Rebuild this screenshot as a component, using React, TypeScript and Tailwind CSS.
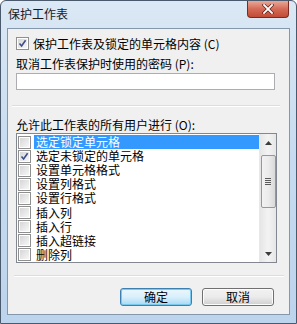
import React from "react";

const font = { fontFamily: '"Noto Sans CJK SC", "Liberation Sans", sans-serif' };

function Check({ checked }: { checked: boolean }) {
  return (
    <div className="w-[13px] h-[13px] border border-[#8f8f8f] bg-white p-[1px] shrink-0">
      <div className="w-full h-full bg-gradient-to-br from-[#d6d6d6] to-[#f7f7f7] relative">
        {checked && (
          <svg viewBox="0 0 9 9" className="absolute inset-0 w-[9px] h-[9px]">
            <path d="M1.5 4.5 L3.6 7 L7.6 1.2" fill="none" stroke="#3b4e8c" strokeWidth="1.6" />
          </svg>
        )}
      </div>
    </div>
  );
}

const items = [
  "选定锁定单元格",
  "选定未锁定的单元格",
  "设置单元格格式",
  "设置列格式",
  "设置行格式",
  "插入列",
  "插入行",
  "插入超链接",
  "删除列",
];

export default function App() {
  return (
    <div
      className="w-[297px] h-[324px] border border-[#4a5a6c] rounded-t-[6px] bg-gradient-to-b from-[#dbe8f5] via-[#c6dbf0] to-[#bcd4ec] flex flex-col text-[12px] text-black overflow-hidden"
      style={font}
    >
      <div className="h-[27px] flex items-start shrink-0">
        <div className="pl-[7px] pt-[6px] text-[12px] leading-[14px] text-[#1b1b1b]">保护工作表</div>
        <div className="ml-auto mr-[7px] w-[42px] h-[17px] rounded-b-[4px] border border-t-0 border-[#7a2a20] bg-gradient-to-b from-[#e8a898] via-[#d46a56] to-[#c24a36] flex items-center justify-center">
          <svg viewBox="0 0 12 10" className="w-[12px] h-[10px]">
            <path d="M2 1 L10 9 M10 1 L2 9" stroke="#5a1c14" strokeWidth="3.2" strokeLinecap="square" />
            <path d="M2 1 L10 9 M10 1 L2 9" stroke="#ffffff" strokeWidth="1.8" strokeLinecap="square" />
          </svg>
        </div>
      </div>
      <div className="mx-[6px] h-[287px] border border-[#8597ab] bg-[#f0f0f0] flex flex-col pl-[8px]">
        <div className="mt-[8px] h-[13px] flex items-center gap-[4px]">
          <Check checked />
          <span className="leading-[14px]">保护工作表及锁定的单元格内容 (C)</span>
        </div>
        <div className="mt-[7px] h-[13px] leading-[13px]">取消工作表保护时使用的密码 (P):</div>
        <div className="mt-[3px] w-[259px] h-[17px] border border-[#abadb3] bg-white" />
        <div className="mt-[15px] -ml-[4px] w-[268px] h-[1px] bg-[#d5dfe5] border-b border-white box-content" />
        <div className="mt-[11px] h-[13px] leading-[13px]">允许此工作表的所有用户进行 (O):</div>
        <div className="mt-[2px] w-[261px] h-[130px] border border-[#828790] bg-white flex">
          <div className="flex-1 flex flex-col pt-[1px] pl-[1px]">
            {items.map((t, i) => (
              <div key={t} className="h-[14.2px] flex items-center">
                <Check checked={i === 1} />
                <div
                  className={
                    "ml-[3px] h-full flex-1 flex items-center pl-[2px] leading-[14px] " +
                    (i === 0 ? "bg-[#3399ff] text-white" : "")
                  }
                >
                  {t}
                </div>
              </div>
            ))}
          </div>
          <div className="w-[17px] h-full bg-gradient-to-r from-[#e6e6e6] via-[#f3f3f3] to-[#e6e6e6] border-l border-[#e8e8e8] flex flex-col items-center">
            <div className="h-[17px] w-full flex items-center justify-center">
              <svg viewBox="0 0 7 4" className="w-[7px] h-[4px]">
                <path d="M0 4 L3.5 0 L7 4 Z" fill="#3c3c3c" />
              </svg>
            </div>
            <div className="mt-[4px] w-[15px] h-[53px] rounded-[2px] border border-[#979797] bg-gradient-to-r from-[#f2f2f2] via-[#ebebeb] to-[#d9d9d9] flex flex-col items-center justify-center gap-[1px]">
              <div className="w-[6px] h-[1px] bg-[#5a5a5a]" />
              <div className="w-[6px] h-[1px] bg-[#5a5a5a]" />
              <div className="w-[6px] h-[1px] bg-[#5a5a5a]" />
              <div className="w-[6px] h-[1px] bg-[#5a5a5a]" />
            </div>
            <div className="mt-auto h-[17px] w-full flex items-center justify-center">
              <svg viewBox="0 0 7 4" className="w-[7px] h-[4px]">
                <path d="M0 0 L3.5 4 L7 0 Z" fill="#3c3c3c" />
              </svg>
            </div>
          </div>
        </div>
        <div className="mt-[12px] -ml-[2px] w-[270px] h-[1px] bg-[#d5dfe5] border-b border-white box-content" />
        <div className="mt-[11px] flex gap-[10px] pl-[104px]">
          <div className="w-[72px] h-[18px] rounded-[3px] border border-[#3c7fb1] bg-gradient-to-b from-[#eaf6fd] via-[#d9f0fc] to-[#a7d9f5] flex items-center justify-center shadow-[inset_0_0_0_1px_#78c8f0]">
            确定
          </div>
          <div className="w-[72px] h-[18px] rounded-[3px] border border-[#707070] bg-gradient-to-b from-[#f2f2f2] via-[#ebebeb] to-[#cfcfcf] flex items-center justify-center shadow-[inset_0_0_0_1px_#fcfcfc]">
            取消
          </div>
        </div>
      </div>
    </div>
  );
}
